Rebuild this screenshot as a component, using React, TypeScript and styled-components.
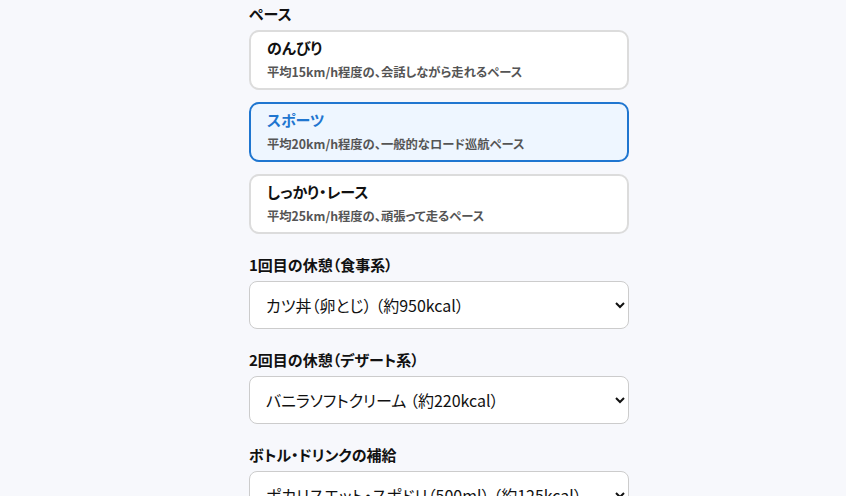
import React, { useState } from "react";
import styled, { createGlobalStyle } from "styled-components";

const GlobalStyle = createGlobalStyle`
  html, body {
    margin: 0;
    padding: 0;
    background: #f7f8fc;
  }
  body {
    font-family: "Noto Sans CJK JP", "Noto Sans", sans-serif;
    font-feature-settings: "palt";
    color: #111;
  }
`;

const Page = styled.div`
  display: flex;
  justify-content: center;
  padding: 3px 0 0 32px;
`;

const Column = styled.div`
  width: 380px;
  display: flex;
  flex-direction: column;
  gap: 20px;
`;

const Section = styled.section`
  display: flex;
  flex-direction: column;
`;

const Label = styled.div`
  font-size: 15px;
  line-height: 22px;
  font-weight: 700;
  margin-bottom: 5px;
`;

const OptionList = styled.div`
  display: flex;
  flex-direction: column;
  gap: 12px;
`;

const PaceCard = styled.button<{ $active: boolean }>`
  display: flex;
  flex-direction: column;
  align-items: flex-start;
  gap: 4px;
  box-sizing: border-box;
  width: 100%;
  height: 60px;
  padding: 5px 16px 0;
  border: 2px solid ${(p) => (p.$active ? "#1f76d0" : "#dcdcdc")};
  border-radius: 10px;
  background: ${(p) => (p.$active ? "#eef6ff" : "#ffffff")};
  font-family: inherit;
  font-feature-settings: inherit;
  text-align: left;
  cursor: pointer;
`;

const PaceTitle = styled.span<{ $active: boolean }>`
  font-size: 15px;
  line-height: 22px;
  font-weight: 700;
  color: ${(p) => (p.$active ? "#1f76d0" : "#111")};
`;

const PaceNote = styled.span`
  font-size: 12.3px;
  line-height: 18px;
  font-weight: 700;
  color: #555;
`;

const Select = styled.select`
  box-sizing: border-box;
  width: 100%;
  height: 48px;
  padding: 0 12px;
  border: 1px solid #cccccc;
  border-radius: 8px;
  background: #ffffff;
  font-family: inherit;
  font-feature-settings: inherit;
  font-size: 16px;
  color: #111;
`;

const paces = [
  { id: "easy", title: "のんびり", note: "平均15km/h程度の、会話しながら走れるペース" },
  { id: "sport", title: "スポーツ", note: "平均20km/h程度の、一般的なロード巡航ペース" },
  { id: "race", title: "しっかり・レース", note: "平均25km/h程度の、頑張って走るペース" },
];

const meals = ["カツ丼（卵とじ） （約950kcal）", "ざるそば （約450kcal）", "カレーライス （約800kcal）"];
const desserts = ["バニラソフトクリーム （約220kcal）", "あんみつ （約300kcal）"];
const drinks = ["ポカリスエット・スポドリ（500ml） （約125kcal）", "水（500ml） （0kcal）"];

export default function App() {
  const [pace, setPace] = useState("sport");
  return (
    <>
      <GlobalStyle />
      <Page>
        <Column>
          <Section>
            <Label>ペース</Label>
            <OptionList>
              {paces.map((p) => (
                <PaceCard key={p.id} $active={pace === p.id} onClick={() => setPace(p.id)}>
                  <PaceTitle $active={pace === p.id}>{p.title}</PaceTitle>
                  <PaceNote>{p.note}</PaceNote>
                </PaceCard>
              ))}
            </OptionList>
          </Section>
          <Section>
            <Label>1回目の休憩（食事系）</Label>
            <Select defaultValue={meals[0]}>
              {meals.map((m) => (
                <option key={m}>{m}</option>
              ))}
            </Select>
          </Section>
          <Section>
            <Label>2回目の休憩（デザート系）</Label>
            <Select defaultValue={desserts[0]}>
              {desserts.map((m) => (
                <option key={m}>{m}</option>
              ))}
            </Select>
          </Section>
          <Section>
            <Label>ボトル・ドリンクの補給</Label>
            <Select defaultValue={drinks[0]}>
              {drinks.map((m) => (
                <option key={m}>{m}</option>
              ))}
            </Select>
          </Section>
        </Column>
      </Page>
    </>
  );
}
